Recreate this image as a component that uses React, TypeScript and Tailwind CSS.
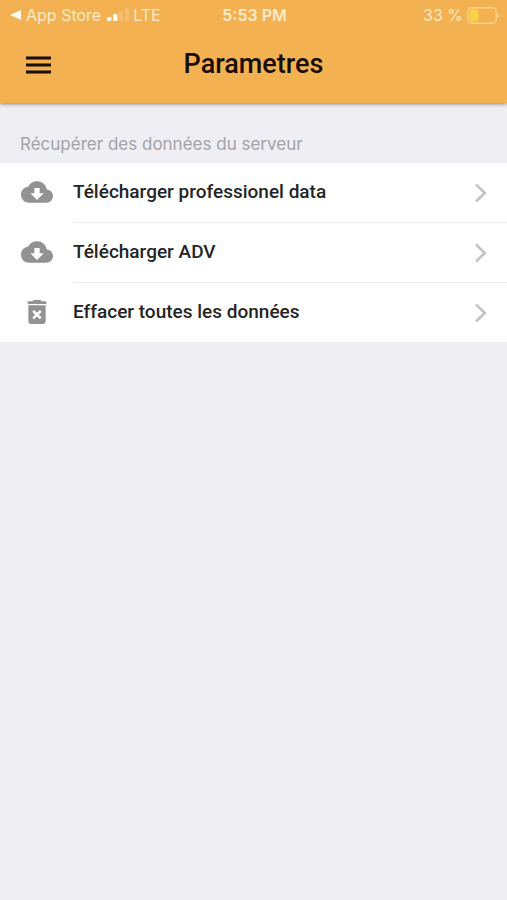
import type { ReactNode } from "react";

const CloudDownloadIcon = () => (
  <svg viewBox="0 0 24 24" className="h-8 w-8" fill="currentColor" aria-hidden="true">
    <path d="M19.35 10.04C18.67 6.59 15.64 4 12 4 9.11 4 6.6 5.64 5.35 8.04 2.34 8.36 0 10.91 0 14c0 3.31 2.69 6 6 6h13c2.76 0 5-2.24 5-5 0-2.64-2.05-4.78-4.65-4.96zM17 13l-5 5-5-5h3V9h4v4h3z" />
  </svg>
);

const TrashIcon = () => (
  <svg viewBox="0 0 24 24" className="h-8 w-8" fill="currentColor" aria-hidden="true">
    <path
      fillRule="evenodd"
      d="M5.500 19c0 1.1.9 2 2 2h9c1.1 0 2-.9 2-2V7h-13v12zM8.46 11.88l1.41-1.41L12 12.59l2.12-2.12 1.41 1.41L13.41 14l2.12 2.12-1.41 1.41L12 15.41l-2.12 2.12-1.41-1.41L10.59 14l-2.13-2.12zM15.5 4l-1-1h-5l-1 1H5v2h14V4z"
    />
  </svg>
);

const ChevronIcon = () => (
  <svg viewBox="0 0 12 20" className="h-5 w-3 text-[#c4c4c6]" fill="none" stroke="currentColor" strokeWidth="2.6" aria-hidden="true">
    <path d="M1 1.5 9.8 10 1 18.5" />
  </svg>
);

const items: { label: string; icon: ReactNode }[] = [
  { label: "Télécharger professionel data", icon: <CloudDownloadIcon /> },
  { label: "Télécharger ADV", icon: <CloudDownloadIcon /> },
  { label: "Effacer toutes les données", icon: <TrashIcon /> },
];

const StatusBar = () => (
  <div className="grid h-[30px] grid-cols-[1fr_auto_1fr] items-center pr-2 pl-2.5 font-['Inter',sans-serif] text-base text-[#fdebc9]">
    <div className="flex items-center gap-1">
      <svg viewBox="0 0 12 12" className="h-3 w-3" fill="#fffaf0" aria-hidden="true">
        <path d="M0 6 11 1v10z" />
      </svg>
      <span className="whitespace-nowrap">App Store</span>
      <svg viewBox="0 0 24 14" className="h-3.5 w-6" aria-hidden="true">
        <rect x="2" y="9" width="4.500" height="4" rx="1" fill="#fffaf0" />
        <rect x="8" y="6" width="4.500" height="7" rx="1" fill="#fffaf0" />
        <rect x="14" y="3" width="4" height="10" rx="1" fill="#f5be72" />
        <rect x="20" y="0" width="4" height="13" rx="1" fill="#f5be72" />
      </svg>
      <span>LTE</span>
    </div>
    <span className="font-semibold">5:53 PM</span>
    <div className="flex items-center justify-end gap-1">
      <span className="whitespace-nowrap">33 %</span>
      <svg viewBox="0 0 32 17" className="h-[17px] w-8" aria-hidden="true">
        <rect x="0.75" y="0.75" width="28.5" height="15.5" rx="4" fill="none" stroke="#f8d48d" strokeWidth="1.3" />
        <rect x="2.5" y="2.5" width="9" height="12" rx="3" fill="#f8d34a" />
        <path d="M30.5 6v5c1-.4 1.5-1.3 1.5-2.500s-.5-2.100-1.500-2.500z" fill="#f8d48d" />
      </svg>
    </div>
  </div>
);

const App = () => {
  return (
    <div className="min-h-screen bg-[#eeeef3] font-['Roboto',sans-serif]">
      <header className="relative bg-[#f3b152] shadow-[0_1px_4px_rgba(0,0,0,0.45)]">
        <StatusBar />
        <div className="grid grid-cols-[1fr_auto_1fr] items-center px-5 pt-4 pb-[21px]">
          <button type="button" aria-label="Menu" className="h-9 w-9">
            <svg viewBox="0 0 36 36" className="h-9 w-9" stroke="#1a0d05" strokeWidth="3" aria-hidden="true">
              <path d="M6 12h25M6 19h25M6 26h25" />
            </svg>
          </button>
          <h1 className="text-[27px] leading-9 font-medium text-[#1a0d05]">Parametres</h1>
        </div>
      </header>

      <main>
        <h2 className="px-5 pt-7 pb-1.5 font-['Inter',sans-serif] text-[17px] leading-[26px] text-[#a3a3a8]">
          Récupérer des données du serveur
        </h2>
        <ul className="bg-white">
          {items.map((item) => (
            <li key={item.label} className="group">
              <button type="button" className="flex w-full items-center gap-5 pl-[21px] text-left">
                <span className="pb-0.5 text-[#929292]">{item.icon}</span>
                <span className="flex h-[60px] flex-1 items-center justify-between border-b border-[#ededee] pr-5 group-last:h-[59px] group-last:border-b-0">
                  <span className="text-[19px] font-medium text-[#252525]">{item.label}</span>
                  <ChevronIcon />
                </span>
              </button>
            </li>
          ))}
        </ul>
      </main>
    </div>
  );
};

export default App;
